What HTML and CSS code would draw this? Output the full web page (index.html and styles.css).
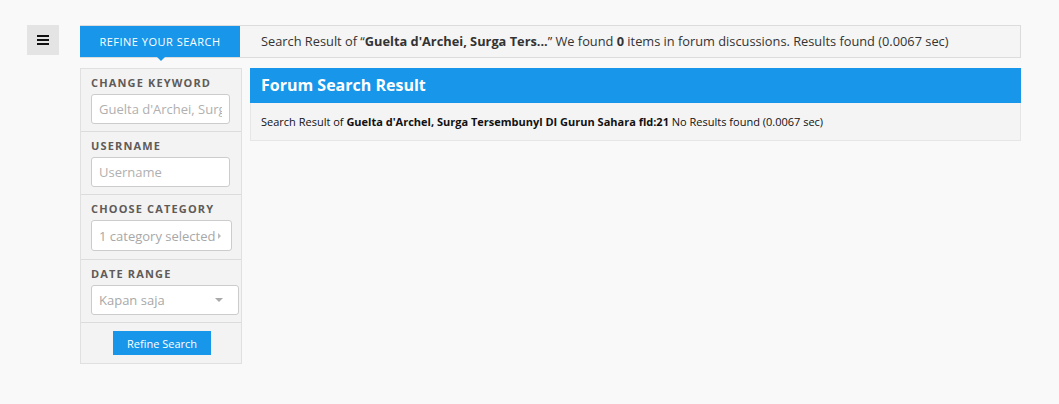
FILE: index.html
```html
<!DOCTYPE html>
<html lang="id">
<head>
    <meta charset="UTF-8">
    <meta name="viewport" content="width=device-width, initial-scale=1.0">
    <title>Forum Search</title>
    <link rel="stylesheet" href="styles.css">
</head>
<body>

    <div class="page">
        <button class="menu-btn" type="button">
            <svg width="12" height="10" viewBox="0 0 12 10">
                <rect x="0" y="0" width="12" height="2" fill="#111"/>
                <rect x="0" y="4" width="12" height="2" fill="#111"/>
                <rect x="0" y="8" width="12" height="2" fill="#111"/>
            </svg>
        </button>

        <div class="content">
            <div class="top-bar">
                <div class="refine-tab">REFINE YOUR SEARCH</div>
                <div class="summary">Search Result of &ldquo;<b>Guelta d'Archei, Surga Ters...</b>&rdquo; We found <b>0</b> items in forum discussions. Results found (0.0067 sec)</div>
            </div>

            <div class="columns">
                <form class="sidebar">
                    <div class="field">
                        <label for="keyword">CHANGE KEYWORD</label>
                        <input type="text" id="keyword" class="text-input" placeholder="Guelta d'Archei, Surga Tersembunyi">
                    </div>
                    <div class="field">
                        <label for="username">USERNAME</label>
                        <input type="text" id="username" class="text-input" placeholder="Username">
                    </div>
                    <div class="field tall">
                        <label>CHOOSE CATEGORY</label>
                        <div class="picker category">
                            <span>1 category selected</span>
                            <span class="arrow-right"></span>
                        </div>
                    </div>
                    <div class="field">
                        <label>DATE RANGE</label>
                        <div class="picker date">
                            <span>Kapan saja</span>
                            <span class="arrow-down"></span>
                        </div>
                    </div>
                    <div class="actions">
                        <button type="button" class="refine-btn">Refine Search</button>
                    </div>
                </form>

                <div class="results">
                    <h2 class="results-head">Forum Search Result</h2>
                    <div class="results-body">Search Result of <b>Guelta d'Archel, Surga Tersembunyl DI Gurun Sahara fld:21</b> No Results found (0.0067 sec)</div>
                </div>
            </div>
        </div>
    </div>

</body>
</html>
```

FILE: styles.css
```css
body {
    font-family: 'Open Sans', 'Liberation Sans', sans-serif;
    margin: 0;
    padding: 0;
    background-color: #f9f9f9;
    color: #333;
}

.page {
    display: flex;
    align-items: flex-start;
    gap: 21px;
    padding: 25px 0 0 27px;
}

/* boton del menu */
.menu-btn {
    width: 32px;
    height: 30px;
    border: none;
    background-color: #e4e4e4;
    display: flex;
    align-items: center;
    justify-content: center;
    padding: 0;
    cursor: pointer;
}

.content {
    width: 941px;
}

/* barra superior */
.top-bar {
    display: flex;
    align-items: stretch;
    height: 31px;
    border: 1px solid #dcdcdc;
    border-left: none;
    background-color: #f5f5f5;
}

.refine-tab {
    position: relative;
    width: 160px;
    background-color: #1796ea;
    color: #fff;
    font-size: 11px;
    letter-spacing: 0.5px;
    display: flex;
    align-items: center;
    justify-content: center;
}

.refine-tab:after {
    content: "";
    position: absolute;
    left: 77px;
    bottom: -4px;
    border-left: 4px solid transparent;
    border-right: 4px solid transparent;
    border-top: 4px solid #1796ea;
}

.summary {
    font-size: 12.8px;
    color: #333;
    padding-left: 21px;
    line-height: 31px;
    white-space: nowrap;
}

/* columnas */
.columns {
    display: flex;
    align-items: flex-start;
    gap: 8px;
    margin-top: 10px;
}

.sidebar {
    width: 160px;
    background-color: #f3f3f3;
    border: 1px solid #e0e0e0;
    margin: 0;
}

.field {
    padding: 6px 10px 7px 10px;
    border-bottom: 1px solid #dcdcdc;
}

.field.tall {
    padding-bottom: 8px;
}

.field label {
    display: block;
    font-size: 11px;
    font-weight: bold;
    letter-spacing: 1.15px;
    color: #5f5b58;
    line-height: 16px;
    margin-bottom: 3px;
}

.text-input {
    display: block;
    width: 139px;
    height: 30px;
    box-sizing: border-box;
    border: 1px solid #ccc;
    border-radius: 3px;
    padding: 0 7px;
    font-family: inherit;
    font-size: 13px;
    color: #333;
    background-color: #fff;
}

.text-input::placeholder {
    color: #b0b0b0;
}

.picker {
    height: 31px;
    box-sizing: border-box;
    border: 1px solid #ccc;
    border-radius: 3px;
    background-color: #fff;
    font-size: 13px;
    color: #a8a8a8;
    display: flex;
    align-items: center;
    justify-content: space-between;
    padding: 0 7px;
}

.picker.category {
    width: 141px;
    padding-right: 10px;
}

.picker.date {
    width: 148px;
    height: 30px;
    padding-right: 15px;
}

.arrow-right {
    border-top: 3px solid transparent;
    border-bottom: 3px solid transparent;
    border-left: 3px solid #bbb;
}

.arrow-down {
    border-left: 4px solid transparent;
    border-right: 4px solid transparent;
    border-top: 4px solid #aaa;
}

.actions {
    display: flex;
    justify-content: center;
    padding: 8px 0 8px 0;
}

.refine-btn {
    width: 98px;
    height: 24px;
    border: none;
    background-color: #1796ea;
    color: #fff;
    font-family: inherit;
    font-size: 11px;
    cursor: pointer;
    margin-left: 2px;
}

/* resultados */
.results {
    flex: 1;
}

.results-head {
    margin: 0;
    height: 35px;
    background-color: #1796ea;
    color: #fff;
    font-size: 16px;
    font-weight: bold;
    line-height: 35px;
    padding-left: 11px;
}

.results-body {
    background-color: #f4f4f4;
    border: 1px solid #e6e6e6;
    border-top: none;
    height: 38px;
    box-sizing: border-box;
    line-height: 38px;
    padding-left: 10px;
    font-size: 11px;
    color: #111;
    white-space: nowrap;
}
```
